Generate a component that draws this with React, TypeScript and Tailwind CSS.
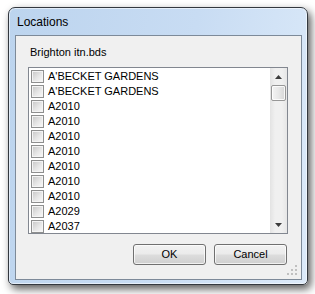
import React from "react";

const items = [
  "A'BECKET GARDENS",
  "A'BECKET GARDENS",
  "A2010",
  "A2010",
  "A2010",
  "A2010",
  "A2010",
  "A2010",
  "A2010",
  "A2029",
  "A2037",
];

function CheckBox() {
  return (
    <div className="w-[13px] h-[13px] shrink-0 border border-[#8e8f8f] bg-[#f4f4f4] p-[1px]">
      <div className="w-full h-full bg-[linear-gradient(135deg,#cbcbcb_0%,#e6e6e6_55%,#f6f6f6_100%)]" />
    </div>
  );
}

function Arrow({ up }: { up: boolean }) {
  return (
    <svg width="7" height="4" viewBox="0 0 7 4">
      {up ? (
        <polygon points="0,4 7,4 3.5,0" fill="#3c3c3c" />
      ) : (
        <polygon points="0,0 7,0 3.5,4" fill="#3c3c3c" />
      )}
    </svg>
  );
}

function Button({ label }: { label: string }) {
  return (
    <div className="w-[73px] h-[21px] rounded-[3px] border border-[#707070] bg-[linear-gradient(180deg,#f2f2f2_0%,#ebebeb_48%,#dddddd_52%,#cfcfcf_100%)] shadow-[inset_0_0_0_1px_rgba(255,255,255,0.7)] flex items-center justify-center text-[11px] text-black leading-none pb-[1px]">
      {label}
    </div>
  );
}

export default function App() {
  return (
    <div
      className="w-[315px] h-[294px] bg-white pt-[7px] pl-[8px]"
      style={{ fontFamily: '"Liberation Sans", Arial, sans-serif' }}
    >
      <div className="w-[300px] h-[278px] border border-[#33383f] rounded-t-[7px] rounded-b-[5px] bg-[linear-gradient(100deg,#bcd4ee_0%,#c8dcf3_55%,#dceaf9_100%)] shadow-[inset_0_0_0_1px_rgba(255,255,255,0.55),3px_4px_8px_rgba(0,0,0,0.65)] flex flex-col">
        <div className="h-[27px] pl-[8px] flex items-center text-[12px] text-black pt-[1px]">
          Locations
        </div>
        <div className="relative ml-[6px] w-[287px] h-[245px] border border-[#7d8a99] bg-[#f0f0f0] flex flex-col pl-[12px]">
          <div className="pt-[10px] pl-[2px] text-[11px] leading-[13px] text-black">
            Brighton itn.bds
          </div>
          <div className="mt-[8px] w-[260px] h-[167px] border border-[#828790] bg-white flex">
            <div className="flex-1 flex flex-col pl-[2px]">
              {items.map((t, i) => (
                <div key={i} className="h-[15px] flex items-start pt-[2px] gap-[4px]">
                  <CheckBox />
                  <span className="text-[11px] leading-[13px] text-black whitespace-nowrap">{t}</span>
                </div>
              ))}
            </div>
            <div className="w-[17px] h-full bg-[linear-gradient(90deg,#e3e3e3_0%,#f0f0f0_30%,#f0f0f0_70%,#e6e6e6_100%)] flex flex-col">
              <div className="h-[17px] flex items-center justify-center">
                <Arrow up={true} />
              </div>
              <div className="ml-[1px] w-[15px] h-[16px] rounded-[2px] border border-[#979797] bg-[linear-gradient(90deg,#f4f4f4_0%,#e8e8e8_50%,#d6d6d6_100%)] shadow-[inset_0_0_0_1px_rgba(255,255,255,0.8)]" />
              <div className="flex-1" />
              <div className="h-[17px] flex items-center justify-center">
                <Arrow up={false} />
              </div>
            </div>
          </div>
          <div className="mt-[10px] flex justify-end gap-[8px] pr-[14px]">
            <Button label="OK" />
            <Button label="Cancel" />
          </div>
          <svg
            className="absolute right-[3px] bottom-[3px]"
            width="11"
            height="11"
            viewBox="0 0 11 11"
          >
            <rect x="8" y="0" width="2" height="2" fill="#c0c0c0" />
            <rect x="4" y="4" width="2" height="2" fill="#c0c0c0" />
            <rect x="8" y="4" width="2" height="2" fill="#c0c0c0" />
            <rect x="0" y="8" width="2" height="2" fill="#c0c0c0" />
            <rect x="4" y="8" width="2" height="2" fill="#c0c0c0" />
            <rect x="8" y="8" width="2" height="2" fill="#c0c0c0" />
          </svg>
        </div>
      </div>
    </div>
  );
}
